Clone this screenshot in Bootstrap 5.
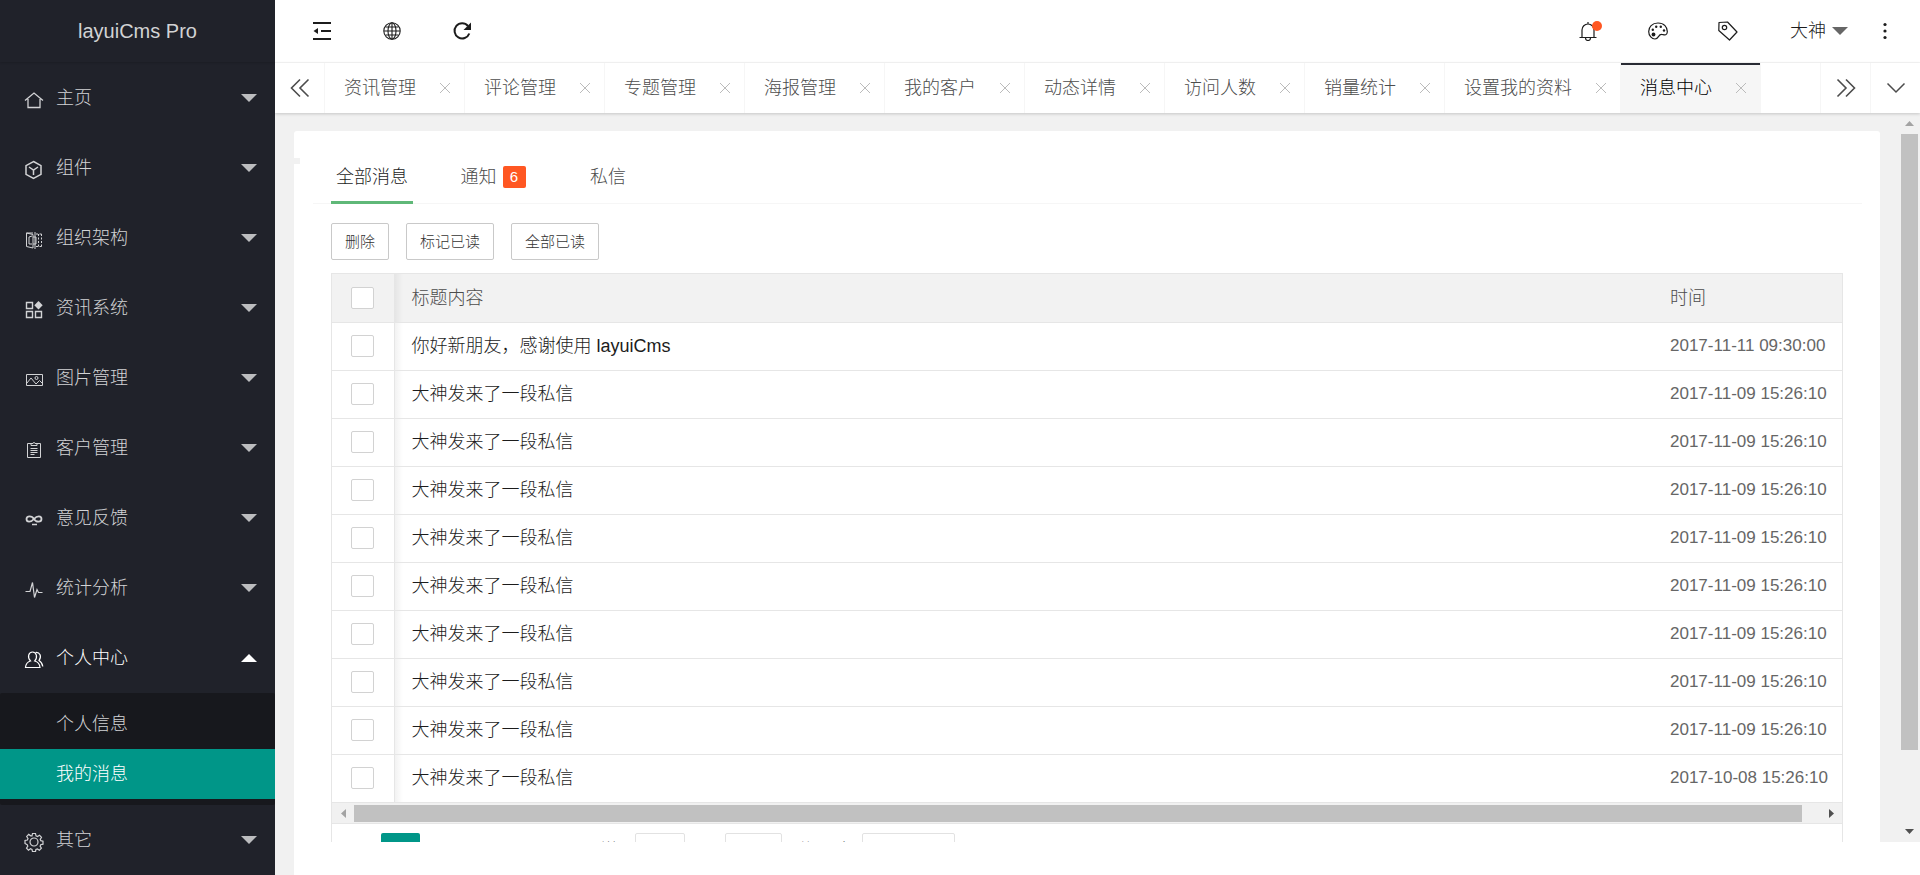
<!DOCTYPE html>
<html lang="zh-CN">
<head>
<meta charset="utf-8">
<meta name="viewport" content="width=device-width, initial-scale=1">
<title>layuiCms Pro</title>
<link href="https://cdn.jsdelivr.net/npm/bootstrap@5.3.0/dist/css/bootstrap.min.css" rel="stylesheet">
<style>
:root{--ink:#1c1c1c;--muted:#4c4c4c;--line:#e6e6e6;--page:#f1f1f1;--teal:#009688;--dark:#20222a}
body{font-family:"Liberation Sans","Noto Sans CJK SC",sans-serif;font-size:18px;font-weight:300;line-height:24px;color:var(--ink);background:#fff}
a{color:inherit;text-decoration:none}
button{color:inherit;font-weight:inherit}
svg{display:block;fill:none;stroke:currentColor}
.plain{border:0;background:none;padding:0}
.side{width:275px;background:var(--dark);color:#d2d3d5;z-index:2}
.brand{height:62px;font-size:20px;font-weight:400;color:#d2d3d4;box-shadow:0 1px 2px rgba(0,0,0,.15);margin-bottom:1px}
.side-item{height:70px;padding:0 18px 0 24px;gap:12px}
.side-item>svg:first-child{width:20px;height:20px;margin-top:3px}
.side-item.open{color:#fff}
.tri{width:16px;height:8px;fill:currentColor;stroke:none}
.side-item .tri{color:#bcbdbf}
.side-item.open .tri{transform:rotate(180deg);color:#fff}
.sub{background:#17181d;padding:6px 0;border-radius:2px}
.sub a{display:block;height:50px;line-height:50px;padding-left:56px}
.sub a.on{background:var(--teal);color:#fff}
.top{height:63px;border-bottom:1px solid #f6f6f6;padding:0 25px 0 12px}
.tool{width:70px;height:62px}
.tool svg{width:20px;height:20px}
.bell{position:relative}
.dot{position:absolute;width:10px;height:10px;border-radius:50%;background:#ff5722;left:39px;top:21px}
.user{width:85px;gap:6px}
.user .tri{color:#666}
.more{width:20px;margin-left:27px}
.tabs{height:50px;color:var(--muted);box-shadow:0 1px 3px rgba(0,0,0,.18);z-index:1;background:#fff}
.tabs .arrow{width:50px}
.tabs .arrow+.arrow,.tabs .arrow.next{border-left:1px solid #f6f6f6}
.tabs .arrow:first-child{border-right:1px solid #f6f6f6}
.pagetab{border-right:1px solid #f6f6f6;padding:0 11px 0 19px;gap:21px;white-space:nowrap}
.pagetab.on{background:#f6f6f6;color:#000;box-shadow:inset 0 2px #292b34}
.pagetab svg{width:16px;height:16px;stroke:#bbb}
.space{background:var(--page)}
.pane{padding:18px 21px 0 19px}
.panel{background:#fff;border-radius:3px 3px 0 0;height:100%;position:relative}
.panel::before{content:"";position:absolute;left:0;top:27px;width:6px;height:6px;background:var(--page)}
.filters{margin:0 18px 0 19px;padding:18px 18px 0;gap:33px;border-bottom:1px solid #f6f6f6;color:var(--muted)}
.filters button{min-width:82px;height:55px;padding:3px 5px 0;gap:6px;border-bottom:3px solid transparent;margin-bottom:-1px}
.filters button.on{border-color:#5fb878;color:var(--ink)}
.filters .counted{margin-left:6px}
.count{background:#ff5722;color:#fff;font-size:15px;font-weight:400;width:23px;line-height:22px;border-radius:2px}
.work{padding:19px 37px 0}
.acts{gap:17px;margin-bottom:13px}
.act{height:37px;padding:0 13px;font-size:15px;border:1px solid #c9c9c9;border-radius:2px;background:#fff;color:#333}
.grid-box{border:1px solid var(--line);border-bottom:0}
.msgs{table-layout:fixed;color:var(--ink);border-color:var(--line);--bs-table-bg:transparent}
.msgs>:not(caption)>*>*{height:48px;padding:0 0 0 17px;border-bottom:1px solid var(--line);box-shadow:none;font-weight:300;vertical-align:middle}
.msgs thead th{background-color:#f2f2f2;color:var(--muted)}
.msgs>:not(caption)>*>:first-child{border-right:1px solid var(--line);padding:0}
.msgs>:not(caption)>*>:nth-child(2){background-image:linear-gradient(to right,rgba(0,0,0,.05),transparent);background-size:8px 100%;background-repeat:no-repeat}
.msgs>tbody>tr>td:last-child{color:#666;font-size:17px}
.c-check{width:62px}.c-time{width:189px}
.msgs .form-check-input{width:23px;height:22px;border:1px solid #d2d2d2;border-radius:2px;margin:0 auto;display:block}
.hbar{height:21px;background:var(--page);border-bottom:1px solid var(--line);padding:2px 0 1px}
.hbar .thumb{flex:1447 0 0}.hbar .rest{flex:18 0 0}
.hbar .cap{width:22px}
.thumb{background:#c1c1c1}
.cap svg,.vcap svg{fill:#505050;stroke:none}
.faint svg{fill:#a3a3a3}
.vbar{width:17px;margin-right:2px}
.vbar .vcap{height:21px}
.vbar .thumb{flex:615 0 0}.vbar .rest{flex:71 0 0}
.pager{padding:9px 0 0 10px;font-size:15px}
.pager>*{height:35px;line-height:32px}
.pg{width:39px;text-align:center}
.pg.on{background:var(--teal);color:#fff;border-radius:2px}
.pg.fwd{margin-left:9px}
.pg.back{color:#d2d2d2}
.reach{margin-left:5px}
.boxed{border:1px solid #e2e2e2;border-radius:2px;background:#fff;font-size:15px;padding:0 8px;color:var(--muted)}
.jump{width:50px;margin:0 12px 0 15px}
.confirm{width:57px;margin:0 16px 0 13px;text-align:center}
.size{width:93px;margin-left:9px}
.foot{height:33px;margin-left:19px;background:#fff}
</style>
</head>
<body>
<svg class="d-none" aria-hidden="true">
  <symbol id="tri" viewBox="0 0 16 8"><path d="M0 0h16L8 8z"/></symbol>
  <symbol id="cross" viewBox="0 0 16 16"><path d="M3 3l10 10M13 3L3 13"/></symbol>
</svg>
<div class="d-flex vh-100 overflow-hidden">
  <nav class="side flex-shrink-0 overflow-hidden" aria-label="主菜单">
    <div class="brand d-flex align-items-center justify-content-center">layuiCms Pro</div>
    <a href="#" class="side-item d-flex align-items-center"><svg viewBox="0 0 20 20" stroke-width="1.300"><path d="M1 10.500L10 3l9 7.500M4 9v8.500h12V9"/></svg><span class="flex-grow-1">主页</span><svg class="tri"><use href="#tri"/></svg></a>
    <a href="#" class="side-item d-flex align-items-center"><svg viewBox="0 0 20 20" stroke-width="1.500"><path d="M9.500 1.500l7.500 4.200v8.600l-7.500 4.200L2 14.300V5.700zM5 7l4.500 3L14 7M9.500 10v5"/></svg><span class="flex-grow-1">组件</span><svg class="tri"><use href="#tri"/></svg></a>
    <a href="#" class="side-item d-flex align-items-center"><svg viewBox="0 0 20 20"><path d="M2.500 3v13.500l6.500 1.500V4.500zM2.500 3H9M5 7l3-1M5 14h3M5 7v7M9 7h3v7H9M11 2v17"/><path d="M12 4h6M12 16.500h6M14.500 4v13M17.500 4v13" stroke-dasharray="2 1.500"/></svg><span class="flex-grow-1">组织架构</span><svg class="tri"><use href="#tri"/></svg></a>
    <a href="#" class="side-item d-flex align-items-center"><svg viewBox="0 0 20 20" stroke-width="1.400"><path d="M2.500 2.500h6v6h-6zM2.500 11.500h6v6h-6zM11.500 11.500h6v6h-6z"/><path d="M14.500 1l4.200 4.200-4.200 4.200-4.200-4.200z" fill="currentColor" stroke="none"/></svg><span class="flex-grow-1">资讯系统</span><svg class="tri"><use href="#tri"/></svg></a>
    <a href="#" class="side-item d-flex align-items-center"><svg viewBox="0 0 20 20"><path d="M2.500 4.500h16v11h-16zM3 13l4-5 5 6 3.500-3.500L18 13"/><circle cx="12.500" cy="8" r="1.500"/></svg><span class="flex-grow-1">图片管理</span><svg class="tri"><use href="#tri"/></svg></a>
    <a href="#" class="side-item d-flex align-items-center"><svg viewBox="0 0 20 20"><path d="M7 3.500H3.500v14h13v-14H13M7 3.500h2a1 1 0 0 1 2 0h2v2H7zM6.500 8.500h7M6.500 10.500h7M6.500 12.500h7M6.500 14.500h4"/></svg><span class="flex-grow-1">客户管理</span><svg class="tri"><use href="#tri"/></svg></a>
    <a href="#" class="side-item d-flex align-items-center"><svg viewBox="0 0 20 20"><path d="M10 9C8 5.500 2.500 5.500 2.500 9s4.500 3.500 7.500 0 7.500-3.500 7.500 0-5.500 3.500-7.500 0" stroke-width="1.800"/><path d="M8 14.500h5" stroke-width="1.500"/></svg><span class="flex-grow-1">意见反馈</span><svg class="tri"><use href="#tri"/></svg></a>
    <a href="#" class="side-item d-flex align-items-center"><svg viewBox="0 0 20 20" stroke-width="1.200"><path d="M1.500 11.500H6L8.500 2.500l2 15 2.500-8 1.500 3h4"/></svg><span class="flex-grow-1">统计分析</span><svg class="tri"><use href="#tri"/></svg></a>
    <a href="#" class="side-item open d-flex align-items-center"><svg viewBox="0 0 20 20" stroke-width="1.200"><path d="M6.500 11C3 7.500 4.500 2 8.500 2s5.500 5.500 2.200 9c3 .8 5 3 5.300 6.500H1.500C1.800 14 3.500 11.800 6.500 11z"/><path d="M11.500 2.500c4.500-.5 6.500 4 3.500 8 2.500 1.500 3.500 3.500 3.800 6"/></svg><span class="flex-grow-1">个人中心</span><svg class="tri"><use href="#tri"/></svg></a>
    <div class="sub"><a href="#">个人信息</a><a href="#" class="on" aria-current="page">我的消息</a></div>
    <a href="#" class="side-item d-flex align-items-center"><svg viewBox="0 0 20 20" stroke-width="1.200"><circle cx="10" cy="10" r="4"/><path d="M8.500 1.500h3l.5 2.400 1.500.6 2-1.300 2 2.100-1.300 2 .6 1.400 2.200.5v3l-2.300.5-.6 1.500 1.300 2-2 2-2-1.300-1.500.6-.4 2.200h-3l-.5-2.300-1.500-.6-2 1.400-2-2.100 1.300-2-.6-1.500L1 11.500v-3l2.400-.5.6-1.500-1.300-2 2-2.100 2 1.400L8 3.900z"/></svg><span class="flex-grow-1">其它</span><svg class="tri"><use href="#tri"/></svg></a>
  </nav>

  <div class="flex-grow-1 d-flex flex-column" style="min-width:0">
    <header class="top d-flex align-items-center flex-shrink-0">
      <button class="tool plain d-flex align-items-center justify-content-center" aria-label="收起菜单"><svg viewBox="0 0 20 20"><path d="M1 2h18M9 10h10M1 18h18" stroke-width="2"/><path d="M6 7v6L1.500 10z" fill="currentColor" stroke="none"/></svg></button>
      <button class="tool plain d-flex align-items-center justify-content-center" aria-label="前台"><svg viewBox="0 0 20 20" stroke-width="1.100"><circle cx="10" cy="10" r="8.200"/><ellipse cx="10" cy="10" rx="4" ry="8.200"/><path d="M10 2v16M2 10h16M3.500 6h13M3.500 14h13"/></svg></button>
      <button class="tool plain d-flex align-items-center justify-content-center" aria-label="刷新"><svg viewBox="0 0 20 20"><path d="M16 5a7.600 7.600 0 1 0 1.300 7.500" stroke-width="2"/><path d="M19 1.500v7.500h-7.500z" fill="currentColor" stroke="none"/></svg></button>
      <button class="tool plain bell ms-auto d-flex align-items-center justify-content-center" aria-label="消息"><svg viewBox="0 0 20 20" stroke-width="1.200"><path d="M4 16V9a6 6 0 0 1 12 0v7M1.500 16.500h17M10 1v2M7.500 17a2.500 2.500 0 0 0 5 0"/></svg><span class="dot"></span></button>
      <button class="tool plain d-flex align-items-center justify-content-center" aria-label="主题"><svg viewBox="0 0 20 20" stroke-width="1.200"><path d="M10 2C4 2 .7 6 .7 10.500.700 15 4 18 7 18c4 0 3-5 7-4.500 2 .2 5 1.500 5.300-2.500C19.500 6 16 2 10 2z"/><g fill="currentColor" stroke="none"><circle cx="5.500" cy="13.500" r="1.900"/><circle cx="4.800" cy="8.800" r="1.200"/><circle cx="8.200" cy="5.800" r="1.200"/><circle cx="12.800" cy="5.800" r="1.200"/><circle cx="16" cy="9.500" r="1.200"/></g></svg></button>
      <button class="tool plain d-flex align-items-center justify-content-center" aria-label="便签"><svg viewBox="0 0 20 20" stroke-width="1.200"><path d="M1 1.500l8.500-.5L19 11l-7.500 8L.8 9.500z" stroke-linejoin="round"/><circle cx="6.500" cy="6.500" r="2.200"/></svg></button>
      <button class="user plain d-flex align-items-center justify-content-end">大神<svg class="tri"><use href="#tri"/></svg></button>
      <button class="tool more plain d-flex align-items-center justify-content-center" aria-label="更多"><svg viewBox="0 0 20 20"><g fill="currentColor" stroke="none"><circle cx="10" cy="3.500" r="1.600"/><circle cx="10" cy="10" r="1.600"/><circle cx="10" cy="16.500" r="1.600"/></g></svg></button>
    </header>

    <div class="tabs d-flex flex-shrink-0">
      <button class="arrow plain d-flex align-items-center justify-content-center" aria-label="向左"><svg width="20" height="20" viewBox="0 0 20 20" stroke-width="1.600"><path d="M10 1.500L1.500 10l8.500 8.500M18.500 1.500L10 10l8.500 8.500"/></svg></button>
      <div class="d-flex flex-grow-1 overflow-hidden">
        <div class="pagetab d-flex align-items-center"><a href="#">资讯管理</a><button class="plain" aria-label="关闭"><svg><use href="#cross"/></svg></button></div>
        <div class="pagetab d-flex align-items-center"><a href="#">评论管理</a><button class="plain" aria-label="关闭"><svg><use href="#cross"/></svg></button></div>
        <div class="pagetab d-flex align-items-center"><a href="#">专题管理</a><button class="plain" aria-label="关闭"><svg><use href="#cross"/></svg></button></div>
        <div class="pagetab d-flex align-items-center"><a href="#">海报管理</a><button class="plain" aria-label="关闭"><svg><use href="#cross"/></svg></button></div>
        <div class="pagetab d-flex align-items-center"><a href="#">我的客户</a><button class="plain" aria-label="关闭"><svg><use href="#cross"/></svg></button></div>
        <div class="pagetab d-flex align-items-center"><a href="#">动态详情</a><button class="plain" aria-label="关闭"><svg><use href="#cross"/></svg></button></div>
        <div class="pagetab d-flex align-items-center"><a href="#">访问人数</a><button class="plain" aria-label="关闭"><svg><use href="#cross"/></svg></button></div>
        <div class="pagetab d-flex align-items-center"><a href="#">销量统计</a><button class="plain" aria-label="关闭"><svg><use href="#cross"/></svg></button></div>
        <div class="pagetab d-flex align-items-center"><a href="#">设置我的资料</a><button class="plain" aria-label="关闭"><svg><use href="#cross"/></svg></button></div>
        <div class="pagetab on d-flex align-items-center"><a href="#" aria-current="page">消息中心</a><button class="plain" aria-label="关闭"><svg><use href="#cross"/></svg></button></div>
      </div>
      <button class="arrow next plain d-flex align-items-center justify-content-center" aria-label="向右"><svg width="20" height="20" viewBox="0 0 20 20" stroke-width="1.600"><path d="M1.500 1.500L10 10l-8.500 8.500M10 1.500l8.500 8.500-8.500 8.500"/></svg></button>
      <button class="arrow plain d-flex align-items-center justify-content-center" aria-label="标签操作"><svg width="20" height="20" viewBox="0 0 20 20" stroke-width="1.500"><path d="M1.500 5.500L10 14l8.500-8.500"/></svg></button>
    </div>

    <div class="space flex-grow-1 d-flex flex-column" style="min-height:0">
      <div class="d-flex flex-grow-1 overflow-hidden">
        <main class="pane flex-grow-1" style="min-width:0">
          <div class="panel">
            <div class="filters d-flex">
              <button class="plain on d-flex align-items-center justify-content-center">全部消息</button>
              <button class="plain counted d-flex align-items-center justify-content-center">通知<span class="count">6</span></button>
              <button class="plain d-flex align-items-center justify-content-center">私信</button>
            </div>
            <div class="work">
              <div class="acts d-flex"><button class="act">删除</button><button class="act">标记已读</button><button class="act">全部已读</button></div>
              <div class="grid-box">
                <table class="table msgs mb-0">
                  <colgroup><col class="c-check"><col><col class="c-time"></colgroup>
                  <thead><tr><th><input class="form-check-input" type="checkbox" aria-label="全选"></th><th>标题内容</th><th>时间</th></tr></thead>
                  <tbody>
                    <tr><td><input class="form-check-input" type="checkbox" aria-label="选择"></td><td>你好新朋友，感谢使用 layuiCms</td><td>2017-11-11 09:30:00</td></tr>
                    <tr><td><input class="form-check-input" type="checkbox" aria-label="选择"></td><td>大神发来了一段私信</td><td>2017-11-09 15:26:10</td></tr>
                    <tr><td><input class="form-check-input" type="checkbox" aria-label="选择"></td><td>大神发来了一段私信</td><td>2017-11-09 15:26:10</td></tr>
                    <tr><td><input class="form-check-input" type="checkbox" aria-label="选择"></td><td>大神发来了一段私信</td><td>2017-11-09 15:26:10</td></tr>
                    <tr><td><input class="form-check-input" type="checkbox" aria-label="选择"></td><td>大神发来了一段私信</td><td>2017-11-09 15:26:10</td></tr>
                    <tr><td><input class="form-check-input" type="checkbox" aria-label="选择"></td><td>大神发来了一段私信</td><td>2017-11-09 15:26:10</td></tr>
                    <tr><td><input class="form-check-input" type="checkbox" aria-label="选择"></td><td>大神发来了一段私信</td><td>2017-11-09 15:26:10</td></tr>
                    <tr><td><input class="form-check-input" type="checkbox" aria-label="选择"></td><td>大神发来了一段私信</td><td>2017-11-09 15:26:10</td></tr>
                    <tr><td><input class="form-check-input" type="checkbox" aria-label="选择"></td><td>大神发来了一段私信</td><td>2017-11-09 15:26:10</td></tr>
                    <tr><td><input class="form-check-input" type="checkbox" aria-label="选择"></td><td>大神发来了一段私信</td><td>2017-10-08 15:26:10</td></tr>
                  </tbody>
                </table>
                <div class="hbar d-flex">
                  <span class="cap faint d-flex align-items-center justify-content-center"><svg width="5" height="9"><path d="M5 0v9L0 4.500z"/></svg></span>
                  <span class="thumb"></span><span class="rest"></span>
                  <span class="cap d-flex align-items-center justify-content-center"><svg width="5" height="9"><path d="M0 0v9l5-4.500z"/></svg></span>
                </div>
                <div class="pager d-flex">
                  <a href="#" class="pg back d-flex align-items-center justify-content-center" aria-label="上一页"><svg width="8" height="16"><path d="M7 1L1 8l6 7"/></svg></a>
                  <a href="#" class="pg on">1</a><a href="#" class="pg">2</a><a href="#" class="pg">3</a><a href="#" class="pg">4</a>
                  <a href="#" class="pg fwd d-flex align-items-center justify-content-center" aria-label="下一页"><svg width="8" height="16"><path d="M1 1l6 7-6 7"/></svg></a>
                  <label for="page-no" class="reach">到第</label><input id="page-no" class="boxed jump" type="text" value="1"><span>页</span>
                  <button class="boxed confirm">确定</button><span>共 40 条</span>
                  <select class="boxed size" aria-label="每页条数"><option>10 条/页</option></select>
                </div>
              </div>
            </div>
          </div>
        </main>
        <div class="vbar d-flex flex-column flex-shrink-0">
          <span class="vcap faint d-flex align-items-center justify-content-center"><svg width="9" height="5"><path d="M0 5h9L4.500 0z"/></svg></span>
          <span class="thumb"></span><span class="rest"></span>
          <span class="vcap d-flex align-items-center justify-content-center"><svg width="9" height="5"><path d="M0 0h9L4.500 5z"/></svg></span>
        </div>
      </div>
      <div class="foot flex-shrink-0"></div>
    </div>
  </div>
</div>
<script src="https://cdn.jsdelivr.net/npm/bootstrap@5.3.0/dist/js/bootstrap.bundle.min.js"></script>
</body>
</html>
